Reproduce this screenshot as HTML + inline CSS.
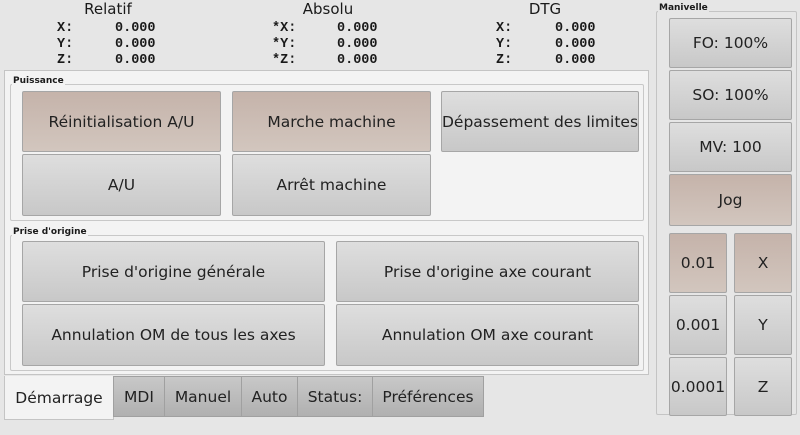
<!DOCTYPE html>
<html><head><meta charset="utf-8"><style>
*{box-sizing:border-box;margin:0;padding:0}
body{width:800px;height:435px;background:#e6e6e6;font-family:"DejaVu Sans","Liberation Sans",sans-serif;color:#1a1a1a;position:relative;overflow:hidden}
.a{position:absolute}
.h{font-size:15px;text-align:center;width:100px}
.m{position:absolute;font-family:"Liberation Mono","DejaVu Sans Mono",monospace;font-weight:bold;font-size:13.5px;line-height:16px;white-space:pre}
.b{position:absolute;border:1px solid #a6a6a6;border-radius:2px;background:linear-gradient(#dedede,#c8c8c8);display:flex;align-items:center;justify-content:center;font-size:15.5px;color:#222;white-space:nowrap}
.p{background:linear-gradient(#c5b3aa,#d2c6be)}
.g{position:absolute;border:1px solid #c8c8c8;border-radius:2px}
.gt{position:absolute;font-size:9px;font-weight:bold;background:#f3f3f3;padding:0 1px}
.t{position:absolute;top:376px;height:41px;border:1px solid #a0a0a0;background:linear-gradient(#c8c8c8,#b0b0b0);font-size:15.5px;display:flex;align-items:center;justify-content:center;color:#222}
</style></head><body>
<div class="a h" style="left:58px;top:0px">Relatif</div>
<div class="a h" style="left:278px;top:0px">Absolu</div>
<div class="a h" style="left:495px;top:0px">DTG</div>
<div class="m" style="left:57px;top:21px">X:
Y:
Z:</div>
<div class="m" style="left:115px;top:21px">0.000
0.000
0.000</div>
<div class="m" style="left:272px;top:21px">*X:
*Y:
*Z:</div>
<div class="m" style="left:337px;top:21px">0.000
0.000
0.000</div>
<div class="m" style="left:496px;top:21px">X:
Y:
Z:</div>
<div class="m" style="left:555px;top:21px">0.000
0.000
0.000</div>

<div class="a" style="left:4px;top:70px;width:645px;height:305px;background:#f3f3f3;border:1px solid #c4c4c4"></div>
<div class="g" style="left:10px;top:84px;width:634px;height:137px"></div>
<div class="gt" style="left:12px;top:76px">Puissance</div>
<div class="b p" style="left:22px;top:91px;width:199px;height:61px">Réinitialisation A/U</div>
<div class="b p" style="left:232px;top:91px;width:199px;height:61px">Marche machine</div>
<div class="b" style="left:441px;top:91px;width:198px;height:61px">Dépassement des limites</div>
<div class="b" style="left:22px;top:154px;width:199px;height:62px">A/U</div>
<div class="b" style="left:232px;top:154px;width:199px;height:62px">Arrêt machine</div>

<div class="g" style="left:10px;top:235px;width:634px;height:136px"></div>
<div class="gt" style="left:12px;top:227px">Prise d'origine</div>
<div class="b" style="left:22px;top:241px;width:303px;height:61px">Prise d'origine générale</div>
<div class="b" style="left:336px;top:241px;width:303px;height:61px">Prise d'origine axe courant</div>
<div class="b" style="left:22px;top:304px;width:303px;height:62px">Annulation OM de tous les axes</div>
<div class="b" style="left:336px;top:304px;width:303px;height:62px">Annulation OM axe courant</div>

<div class="t" style="left:4px;width:110px;height:44px;background:#f3f3f3;border-top:none;border-color:#c4c4c4">Démarrage</div>
<div class="t" style="left:113px;width:52px">MDI</div>
<div class="t" style="left:164px;width:78px">Manuel</div>
<div class="t" style="left:241px;width:57px">Auto</div>
<div class="t" style="left:297px;width:76px">Status:</div>
<div class="t" style="left:372px;width:112px">Préférences</div>

<div class="g" style="left:656px;top:11px;width:141px;height:404px;border-color:#c4c4c4"></div>
<div class="gt" style="left:658px;top:3px;background:#e6e6e6">Manivelle</div>
<div class="b" style="left:669px;top:18px;width:123px;height:50px">FO: 100%</div>
<div class="b" style="left:669px;top:70px;width:123px;height:50px">SO: 100%</div>
<div class="b" style="left:669px;top:122px;width:123px;height:50px">MV: 100</div>
<div class="b p" style="left:669px;top:174px;width:123px;height:52px">Jog</div>
<div class="b p" style="left:669px;top:233px;width:58px;height:60px">0.01</div>
<div class="b p" style="left:734px;top:233px;width:58px;height:60px">X</div>
<div class="b" style="left:669px;top:295px;width:58px;height:60px">0.001</div>
<div class="b" style="left:734px;top:295px;width:58px;height:60px">Y</div>
<div class="b" style="left:669px;top:357px;width:58px;height:59px">0.0001</div>
<div class="b" style="left:734px;top:357px;width:58px;height:59px">Z</div>
</body></html>
